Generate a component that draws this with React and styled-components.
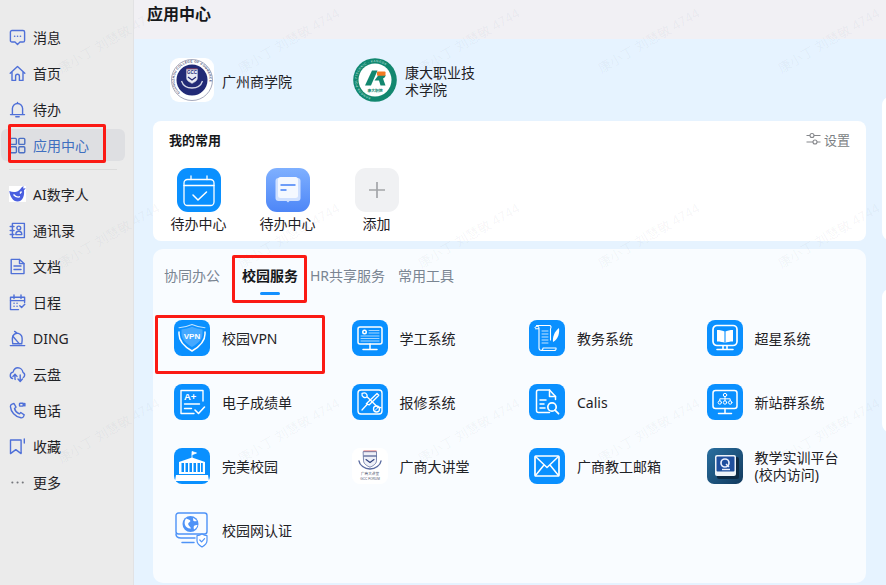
import React from "react";
import styled, { createGlobalStyle } from "styled-components";

const GlobalStyle = createGlobalStyle`
  html, body {
    margin: 0;
    padding: 0;
    background: #e6f3ff;
    font-family: "Noto Sans", "Noto Sans CJK SC", sans-serif;
    color: #1c1f23;
  }
  * { box-sizing: border-box; }
`;

const Page = styled.div`
  position: relative;
  display: flex;
  width: 886px;
  height: 585px;
  overflow: hidden;
`;

const Sidebar = styled.nav`
  flex: 0 0 134px;
  display: flex;
  flex-direction: column;
  padding-top: 19px;
  background: #ebebeb;
  border-right: 1px solid #e2e2e4;
`;

const NavItem = styled.div`
  display: flex;
  align-items: center;
  gap: 7px;
  width: 124px;
  height: 32px;
  margin: 2px 0 2px 1px;
  padding-left: 8px;
  border-radius: 6px;
  font-size: 14px;
  color: ${(p) => (p.$active ? "#3f6fc0" : "#1f2226")};
  background: ${(p) => (p.$active ? "#dedfe2" : "transparent")};
  svg { flex: 0 0 17px; }
`;

const NavDivider = styled.div`
  width: 108px;
  height: 1px;
  margin: 6px 0 6px 9px;
  background: #dcdcdc;
`;

const Main = styled.main`
  flex: 1;
  display: flex;
  flex-direction: column;
  min-width: 0;
`;

const Header = styled.header`
  flex: 0 0 39px;
  padding: 2px 0 0 13px;
  background: #f1f0f4;
  font-size: 16px;
  font-weight: 700;
  line-height: 24px;
  color: #16181b;
`;

const Body = styled.div`
  flex: 1;
  display: flex;
  gap: 16px;
  padding-left: 19px;
  background: #e6f3ff;
`;

const LeftColumn = styled.div`
  flex: 0 0 713px;
  min-width: 0;
  display: flex;
  flex-direction: column;
`;

const RightColumn = styled.div`
  flex: 1;
  display: flex;
  flex-direction: column;
  gap: 49px;
  padding-top: 58px;
`;

const SideCard = styled.div`
  height: 143px;
  width: 30px;
  border-radius: 8px;
  background: #fff;
`;

const Schools = styled.div`
  flex: 0 0 82px;
  display: flex;
  align-items: center;
  padding-left: 17px;
`;

const School = styled.div`
  flex: 0 0 183px;
  display: flex;
  align-items: center;
  gap: 8px;
`;

const SchoolName = styled.div`
  max-width: 72px;
  padding-top: 2px;
  font-size: 14px;
  line-height: 17px;
  color: #1f2226;
`;

const FavCard = styled.section`
  flex: 0 0 120px;
  padding: 8px 16px 0;
  border-radius: 8px;
  background: #fff;
`;

const FavHead = styled.div`
  display: flex;
  justify-content: space-between;
  align-items: center;
  height: 20px;
`;

const FavTitle = styled.div`
  font-size: 13px;
  font-weight: 700;
  color: #16181b;
`;

const Settings = styled.div`
  display: flex;
  align-items: center;
  gap: 3px;
  font-size: 13px;
  color: #7c7f84;
`;

const FavRow = styled.div`
  display: flex;
  margin: 19px 0 0 -15px;
`;

const Fav = styled.div`
  display: flex;
  flex-direction: column;
  align-items: center;
  width: 89px;
  font-size: 14px;
  line-height: 20px;
  color: #1f2226;
  svg { display: block; margin-bottom: 2px; }
`;

const AppsCard = styled.section`
  flex: 0 0 334px;
  margin-top: 8px;
  padding: 17px 0 0 11px;
  border-radius: 10px;
  background: #f9fcff;
`;

const Tabs = styled.div`
  display: flex;
  gap: 12px;
`;

const Tab = styled.div`
  display: flex;
  flex-direction: column;
  align-items: center;
  margin-left: ${(p) => p.$offset}px;
  font-size: 14px;
  line-height: 20px;
  font-weight: ${(p) => (p.$active ? 700 : 400)};
  color: ${(p) => (p.$active ? "#16181b" : "#7a8592")};
`;

const TabBar = styled.span`
  width: 20px;
  height: 3px;
  margin-top: 6px;
  border-radius: 2px;
  background: #1390ff;
`;

const AppGrid = styled.div`
  display: grid;
  grid-template-columns: repeat(3, 177.5px) 1fr;
  grid-auto-rows: 64px;
  margin: 25px 0 0 10px;
`;

const AppItem = styled.div`
  display: flex;
  align-items: flex-start;
  gap: 12px;
  svg { display: block; flex: 0 0 36px; }
`;

const AppName = styled.div`
  height: 36px;
  display: flex;
  align-items: center;
  max-width: 88px;
  font-size: 14px;
  line-height: 17px;
  color: #1f2226;
`;

const RedBox = styled.div`
  position: absolute;
  left: ${(p) => p.$x}px;
  top: ${(p) => p.$y}px;
  width: ${(p) => p.$w}px;
  height: ${(p) => p.$h}px;
  border: 3px solid #fb1a14;
  border-radius: 2px;
  pointer-events: none;
`;

const Watermark = styled.div`
  position: absolute;
  left: 63px;
  top: 60px;
  display: grid;
  grid-template-columns: repeat(5, 180px);
  grid-auto-rows: 195px;
  pointer-events: none;
`;

const Stamp = styled.span`
  display: block;
  width: 130px;
  height: 16px;
  font-size: 13px;
  line-height: 16px;
  white-space: nowrap;
  color: rgba(40, 60, 90, 0.05);
  transform-origin: left bottom;
  transform: rotate(-30deg);
`;

const NAV = "#4f70d8";

const NavIcon = ({ children, color = NAV }) => (
  <svg width="17" height="17" viewBox="0 0 17 17" fill="none" stroke={color} strokeWidth="1.4" strokeLinejoin="round" strokeLinecap="round">
    {children}
  </svg>
);

const Nav = {
  msg: (
    <NavIcon>
      <path d="M3 1.500h11a1.600 1.600 0 0 1 1.600 1.600v8.300a1.600 1.600 0 0 1-1.600 1.600h-3l-2.500 2.500L6 13H3a1.600 1.600 0 0 1-1.600-1.600V3.100A1.600 1.600 0 0 1 3 1.500z" />
      <path d="M5.600 7.300h.1M8.500 7.300h.1M11.400 7.300h.1" strokeWidth="1.600" />
    </NavIcon>
  ),
  home: (
    <NavIcon>
      <path d="M1.200 8.200 8.500 1.500l7.300 6.700M3 6.800V15.400h3.600v-4.200a1.900 1.900 0 0 1 3.800 0v4.200H14V6.800" />
    </NavIcon>
  ),
  bell: (
    <NavIcon>
      <path d="M3.400 13.600V7.600a5.100 5.100 0 0 1 10.200 0v6M1.500 13.600h14" />
      <path d="M6.800 15.800h3.400M8.500 1.400v1" />
    </NavIcon>
  ),
  grid: (
    <NavIcon color="#4a6fc4">
      <rect x="1.400" y="1.400" width="6" height="6" rx="1" />
      <rect x="9.800" y="1.400" width="6" height="6" rx="1" />
      <rect x="1.400" y="9.800" width="6" height="6" rx="1" />
      <rect x="9.800" y="9.800" width="6" height="6" rx="1" />
    </NavIcon>
  ),
  ai: (
    <svg width="17" height="17" viewBox="0 0 17 17">
      <rect width="17" height="16" fill="#fff" />
      <path d="M0.300 5c2.200 1 4.600 1.300 7 .8 2.200-.5 3.800-2.300 5.200-4.300L14.500 0l-.3 2.600 2.500-.3-1.700 2c.6 5.200-1 11.200-6.500 11.200C4 15.500 1 10.500.3 5z" fill="#4a5fe0" />
      <path d="M4.500 8.500c1.800 2.200 4.300 3 6.500 2.200M12.500 5.500l-1.500 2" stroke="#fff" strokeWidth="1.300" fill="none" />
    </svg>
  ),
  contacts: (
    <NavIcon>
      <path d="M3.400 1.400h12v14.200h-12z" />
      <path d="M1.200 4.500h3.800M1.200 8.500h3.800M1.200 12.500h3.800" />
      <circle cx="9.800" cy="6" r="1.900" />
      <path d="M6.800 12.600c0-2 1.300-3.400 3-3.400s3 1.400 3 3.400z" />
    </NavIcon>
  ),
  doc: (
    <NavIcon>
      <path d="M10.500 1.400H2.200v14.200h12.800V5.600z" />
      <path d="M10.500 1.400v4.200H15M5 8h7M5 11.500h7" />
    </NavIcon>
  ),
  calendar: (
    <NavIcon>
      <path d="M15.600 8.500V3.200H1.500v12.400h8" />
      <path d="M5 1v3.600M12 1v3.600M1.500 6.600h14" />
      <path d="M5 9.200h.1M8 9.200h.1M5 12.300h.1M8 12.300h.1" strokeWidth="1.500" />
      <path d="m10.800 11.800 1.800 1.800 3.200-3.400" />
    </NavIcon>
  ),
  ding: (
    <NavIcon>
      <path d="M3.800 13.800c-.6-3.200-.8-7.600 1.400-9.400 2.600-2.100 6-1.100 7.200 1.200 1.300 2.400.8 5.600.3 8.200z" />
      <path d="M1.300 15.600h14.400M5.600 1.400l1.800 1.200M3.800 6.200l6.400 7.400" />
    </NavIcon>
  ),
  cloud: (
    <NavIcon>
      <path d="M3.600 12.600C2 12 1.100 10.600 1.300 9c.2-1.500 1.300-2.700 2.800-2.900C4.800 3.400 6.500 1.800 8.800 1.800c2.800 0 4.900 2.100 5.100 4.500 1.200.5 1.900 1.700 1.700 3-.1.900-.6 1.700-1.300 2.200" />
      <path d="M6 8.300v4.600a2 2 0 0 0 .2.600M3.900 10.400 6 8.200l2 2.200M11.200 9v6.300M9 13.100l2.200 2.300 2.200-2.300" />
    </NavIcon>
  ),
  phone: (
    <NavIcon>
      <path d="M3 2.200 5 1.500l2 3.700-1.500 1.300c.6 2.400 2.500 4.400 4.800 5.400l1.500-1.400 3.400 2.300-.8 2c-.5 1-1.400 1.200-2.500 1C6 14.800 1.800 9.800 1.400 4.600 1.300 3.500 2 2.600 3 2.200z" />
      <rect x="10.500" y="1.300" width="3.800" height="2.800" rx=".5" />
      <path d="m14.300 2.300 1.600-.8v2.400l-1.600-.7" />
    </NavIcon>
  ),
  bookmark: (
    <NavIcon>
      <path d="M1.500 2h10.600v13.600L6.800 11.600 1.500 15.600z" />
      <path d="M15.300 1v4" />
    </NavIcon>
  ),
  more: (
    <NavIcon color="#75777c">
      <path d="M3.300 8.500h.1M8.500 8.500h.1M13.700 8.500h.1" strokeWidth="2" />
    </NavIcon>
  ),
};

const NAV_TOP = [
  { name: "消息", icon: Nav.msg },
  { name: "首页", icon: Nav.home },
  { name: "待办", icon: Nav.bell },
  { name: "应用中心", icon: Nav.grid, active: true },
];

const NAV_BOTTOM = [
  { name: "AI数字人", icon: Nav.ai },
  { name: "通讯录", icon: Nav.contacts },
  { name: "文档", icon: Nav.doc },
  { name: "日程", icon: Nav.calendar },
  { name: "DING", icon: Nav.ding },
  { name: "云盘", icon: Nav.cloud },
  { name: "电话", icon: Nav.phone },
  { name: "收藏", icon: Nav.bookmark },
  { name: "更多", icon: Nav.more },
];

const BLUE = "#0a90ff";

const Tile = ({ children, bg = BLUE }) => (
  <svg width="36" height="36" viewBox="0 0 36 36" fill="none" stroke="#fff" strokeWidth="1.200" strokeLinejoin="round" strokeLinecap="round">
    <rect width="36" height="36" rx="8" fill={bg} stroke="none" />
    {children}
  </svg>
);

const icons = {
  vpn: (
    <Tile>
      <path d="M7.500 9.500c3.800-.5 7-1.400 10.500-2.700 3.500 1.300 6.700 2.200 10.500 2.700v4c0 6-4.500 10-10.500 13.500C12 23.500 7.500 19.500 7.500 13.500z" fill="#45a9ff" stroke="none" />
      <path d="M5 7.800c4.800-.6 9-1.500 13-3.300 4 1.800 8.200 2.700 13 3.300" strokeWidth="1.100" opacity=".75" />
      <path d="M5 12v2c0 7.500 6 13 13 17 7-4 13-9.500 13-17v-2" strokeWidth="1.500" />
      <text x="18" y="18.500" fontSize="8" fontWeight="700" fill="#fff" stroke="none" textAnchor="middle" fontFamily="Liberation Sans, sans-serif">VPN</text>
    </Tile>
  ),
  xuegong: (
    <Tile>
      <rect x="6" y="7" width="24" height="17" rx="2" strokeWidth="1.500" />
      <path d="M18 24v5M11 29.500h14" strokeWidth="1.500" />
      <circle cx="12.500" cy="12" r="2.500" fill="#fff" stroke="none" />
      <circle cx="12.500" cy="12" r="1" fill={BLUE} stroke="none" />
      <path d="M17 10.500h10M17 13h10M9 16h18M9 18.500h18M9 21h18" strokeWidth=".8" opacity=".8" />
    </Tile>
  ),
  jiaowu: (
    <Tile>
      <path d="M6 7.500c1.500-2 4-1.500 4 .5v.8H6.500M7.500 5.500h13c1.500 0 2 1.500 1 3.500v11M10 9v19c0 1.500 1 2.500 2.500 2.500H25c1.500 0 2.500-1 2-2.500h-13c0 1.500-.5 2.500-2 2.500" strokeWidth="1.100" />
      <path d="M13 11h6M13 14h6M13 17h6M13 20h6M13 23h6" strokeWidth=".9" opacity=".85" />
      <path d="M24 22c-.5-5 1-10 6-14 .6 5-.5 11-6 14z" fill="#fff" stroke="none" />
    </Tile>
  ),
  chaoxing: (
    <Tile>
      <rect x="6" y="5.500" width="24" height="20" rx="4" strokeWidth="1.700" />
      <path d="M10 10c3 0 6 .5 8 1.800 2-1.300 5-1.800 8-1.800v11.500c-3 0-6 .5-8 1.500-2-1-5-1.500-8-1.500z" fill="#fff" stroke="none" />
      <path d="M18 11.800V23" stroke={BLUE} strokeWidth="1.100" />
      <path d="M16 26v2.500M20 26v2.500M10 29.500h16" strokeWidth="1.600" />
    </Tile>
  ),
  score: (
    <Tile>
      <path d="M29 17V6.500H7V29.500h13" strokeWidth="1.400" />
      <text x="10" y="16" fontSize="9.500" fontWeight="700" fill="#fff" stroke="none" fontFamily="Liberation Sans, sans-serif">A+</text>
      <path d="M10.500 20h15M10.500 24.500h7" strokeWidth="1.400" />
      <path d="m21 26 3.500 3.500 6-6.500" strokeWidth="1.600" />
    </Tile>
  ),
  repair: (
    <Tile>
      <rect x="6" y="6" width="24" height="24" rx="3" strokeWidth="1.400" />
      <path d="M10 9.500c2-1 4-.5 4.800 1 .4.800.4 1.500.2 2.200l11 10.800c1.500-.5 3 .2 3 .2M15 12.700c-.8.800-2.500 1-3.500.4-1.300-.8-1.800-2.200-1.500-3.600" strokeWidth="1.300" />
      <path d="M25 9.500l1.800 1.800-9.500 9.500-3-1zM15.500 20l-5.500 6" strokeWidth="1.300" />
      <circle cx="24.500" cy="25" r="3" strokeWidth="1.300" />
      <path d="m23 26.500 3-3" strokeWidth="1" />
    </Tile>
  ),
  calis: (
    <Tile>
      <path d="M20.500 28.500H9.500a2 2 0 0 1-2-2V8a2 2 0 0 1 2-2h11l6 6.500v3" strokeWidth="1.500" />
      <path d="M20.500 6v6.500h6M11 16h6M11 20h4M11 24h5" strokeWidth="1.500" />
      <circle cx="23" cy="23" r="4.200" strokeWidth="1.700" />
      <path d="m26 26.200 3.500 3.500" strokeWidth="1.800" />
    </Tile>
  ),
  zhanqun: (
    <Tile>
      <rect x="6" y="6.500" width="24" height="18" rx="2.500" strokeWidth="1.500" />
      <path d="M18 24.500v5M11.500 29.500h13" strokeWidth="1.500" />
      <circle cx="18" cy="11" r="1.700" strokeWidth="1" />
      <circle cx="12.800" cy="18.500" r="1.700" strokeWidth="1" />
      <circle cx="18" cy="18.500" r="1.700" strokeWidth="1" />
      <circle cx="23.200" cy="18.500" r="1.700" strokeWidth="1" />
      <path d="M18 12.700v4M12.800 16.800v-2h10.400v2" strokeWidth="1" />
    </Tile>
  ),
  campus: (
    <Tile>
      <path d="M18 10V3.500l4.500 1.500-4.500 1.800" fill="#fff" strokeWidth=".8" />
      <path d="M5 14l13-4.500L31 14v12H5z" fill="#fff" stroke="none" />
      <path d="M7.500 15h2.500v9H7.500zM11.500 15h2.500v9h-2.500zM15.500 15h2.500v9h-2.500zM19.500 15h2.500v9h-2.500zM23.500 15h2.500v9h-2.500zM27 15h1.800v9H27z" fill={BLUE} stroke="none" />
      <path d="M2 27h32l1 6H1z" fill="#fff" stroke="none" />
    </Tile>
  ),
  lecture: (
    <Tile bg="#ffffff">
      <rect x="11.500" y="2.500" width="13" height="1.200" fill="#e8716b" stroke="none" />
      <path d="M11.500 3.700h13v9c0 3-3 5-6.500 6.500-3.500-1.500-6.500-3.500-6.500-6.500z" fill="#eef0f7" stroke="#46588f" strokeWidth=".7" />
      <path d="M12 8h12M14 11.500l4 3 4-3" stroke="#2d3f7c" strokeWidth="1.100" />
      <path d="M7 13c.5 4 5.500 8 11 8s10.500-4 11-8" stroke="#5a6ba0" strokeWidth="1.400" />
      <text x="18" y="27" fontSize="3.600" fill="#4a4f6a" stroke="none" textAnchor="middle">广商大讲堂</text>
      <text x="18" y="32" fontSize="3.200" fill="#4a4f6a" stroke="none" textAnchor="middle" fontFamily="Liberation Sans, sans-serif">GCC FORUM</text>
    </Tile>
  ),
  mail: (
    <Tile>
      <rect x="6" y="8" width="24" height="20" rx="1" strokeWidth="1.700" />
      <path d="M6.500 8.500 18 19.500 29.500 8.500M6.500 27.500l8.500-10.500M29.500 27.500 21 17" strokeWidth="1.500" />
    </Tile>
  ),
  training: (
    <svg width="36" height="36" viewBox="0 0 36 36">
      <defs>
        <linearGradient id="trainBg" x1="0" y1="0" x2="1" y2="1">
          <stop offset="0" stopColor="#2a6fa0" />
          <stop offset="1" stopColor="#123a5e" />
        </linearGradient>
      </defs>
      <rect width="36" height="36" rx="7" fill="url(#trainBg)" />
      <rect x="10" y="9" width="22" height="22" rx="2" fill="#0d2a45" />
      <rect x="8" y="7" width="21" height="21" rx="2" fill="#eef2f8" />
      <rect x="9.500" y="8.500" width="18" height="15" rx="1" fill="#1f4f9e" />
      <circle cx="18" cy="15" r="4" fill="none" stroke="#e8eefb" strokeWidth="1.700" />
      <path d="M15 21.500h8" stroke="#e8eefb" strokeWidth="1.400" />
      <path d="M19 16l3 3" stroke="#e8eefb" strokeWidth="1.400" />
    </svg>
  ),
  network: (
    <svg width="36" height="36" viewBox="0 0 36 36" fill="none" stroke="#4f93f7" strokeWidth="1.200" strokeLinecap="round" strokeLinejoin="round">
      <rect x="2" y="1" width="31" height="21" rx="2.500" strokeWidth="1.400" />
      <path d="M21 26H7c-3 0-5-1.500-5-4M8 30.500h12" strokeWidth="1.500" />
      <circle cx="16.500" cy="12" r="8" fill="#4f93f7" stroke="none" />
      <path d="M12 6.500c2 .5 3.500 1 4.500 2.500-1 1.500-3 2-2 4s2 1.500 2.500 3.500c-2.500.5-5-1-6-3.500-.8-2.200-.2-4.800 1-6.500zM19 6c1.500.5 3 1.500 3.800 3-1 .6-2.500.3-3.500-.3zM20 14c.8-.8 2-1 3.500-1-.5 2-1.800 3.600-3.500 4.500-.5-1.500-.5-2.500 0-3.500z" fill="#fff" stroke="none" />
      <path d="M28 22c1.800 1 3.500 1.500 5 1.700v4.800c0 3-2.300 5-5 6.500-2.700-1.500-5-3.500-5-6.500v-4.800c1.500-.2 3.200-.7 5-1.700z" fill="#fff" />
      <path d="m25.800 28 1.800 1.800 3-3.200" />
    </svg>
  ),
};

const APPS = [
  { name: "校园VPN", icon: icons.vpn },
  { name: "学工系统", icon: icons.xuegong },
  { name: "教务系统", icon: icons.jiaowu },
  { name: "超星系统", icon: icons.chaoxing },
  { name: "电子成绩单", icon: icons.score },
  { name: "报修系统", icon: icons.repair },
  { name: "Calis", icon: icons.calis },
  { name: "新站群系统", icon: icons.zhanqun },
  { name: "完美校园", icon: icons.campus },
  { name: "广商大讲堂", icon: icons.lecture },
  { name: "广商教工邮箱", icon: icons.mail },
  { name: "教学实训平台(校内访问)", icon: icons.training },
  { name: "校园网认证", icon: icons.network },
];

const TABS = [
  { name: "协同办公", offset: 0 },
  { name: "校园服务", offset: 10, active: true },
  { name: "HR共享服务", offset: 0 },
  { name: "常用工具", offset: 1 },
];

function GccLogo() {
  return (
    <svg width="44" height="44" viewBox="0 0 44 44">
      <defs>
        <path id="gccRing" d="M22 39.500a17.500 17.500 0 1 1 .01 0" />
      </defs>
      <rect width="44" height="44" rx="9" fill="#fff" />
      <circle cx="22" cy="22" r="20.500" fill="#fff" stroke="#8f93ab" strokeWidth=".8" />
      <text fontSize="3.200" fill="#4a4f78" fontFamily="Liberation Sans, sans-serif" fontWeight="700" letterSpacing=".3">
        <textPath href="#gccRing" startOffset="12%">GUANGZHOU COLLEGE OF COMMERCE</textPath>
      </text>
      <circle cx="22" cy="22" r="15.500" fill="#222a76" />
      <path d="M16.500 11h11" stroke="#d9534f" strokeWidth=".8" />
      <path d="M16.500 11.500h11V20c0 2.500-2.500 4-5.500 5.500-3-1.500-5.500-3-5.500-5.500z" fill="#e9ebf4" stroke="#b8bbd0" strokeWidth=".5" />
      <text x="22" y="16" fontSize="4.500" fill="#222a76" textAnchor="middle" fontFamily="Liberation Sans, sans-serif" fontWeight="700">GCC</text>
      <path d="M18 19l4 3 4-3" stroke="#222a76" strokeWidth="1.200" fill="none" />
      <path d="M11.500 23c1.500 4.500 5.500 7 10.500 7s9-2.500 10.500-7" stroke="#d8dae8" strokeWidth="1.300" fill="none" />
    </svg>
  );
}

function KangdaLogo() {
  return (
    <svg width="44" height="44" viewBox="0 0 44 44">
      <defs>
        <path id="kdRing" d="M22 40a18 18 0 1 1 .01 0" />
      </defs>
      <circle cx="22" cy="22" r="21.800" fill="#12876f" />
      <text fontSize="3" fill="#d9efe9" fontFamily="Liberation Sans, sans-serif" letterSpacing=".5">
        <textPath href="#kdRing" startOffset="4%">KANGDA POLYTECHNIC · KANGDA</textPath>
      </text>
      <circle cx="22" cy="22" r="16.500" fill="#fff" />
      <path d="M12 27.500 19 12.500h5.500L18 27.500z" fill="#12876f" />
      <path d="M21.500 22.500h4.500l1.500 5h5l-2.500-7c2-.8 2.500-2 2.500-3.500h-7z" fill="#12876f" />
      <rect x="24" y="13.500" width="8.500" height="4.200" rx=".8" fill="#f27a23" />
      <text x="22" y="33.500" fontSize="3.800" fill="#12876f" textAnchor="middle" fontWeight="700">康大职院</text>
    </svg>
  );
}

function FavCalendar() {
  return (
    <svg width="44" height="44" viewBox="0 0 44 44" fill="none" stroke="#fff" strokeWidth="1.300" strokeLinecap="round" strokeLinejoin="round">
      <rect width="44" height="44" rx="11" fill="#0a90ff" stroke="none" />
      <rect x="7" y="11.500" width="30" height="26" rx="3.500" />
      <path d="M7 17.500h30M14 8v3.500M30 8v3.500" />
      <path d="m16 27 5 5 8.500-8" strokeWidth="1.500" />
    </svg>
  );
}

function FavBook() {
  return (
    <svg width="44" height="44" viewBox="0 0 44 44">
      <defs>
        <linearGradient id="favBook" x1="0" y1="0" x2="0" y2="1">
          <stop offset="0" stopColor="#7fb0ff" />
          <stop offset="1" stopColor="#4d86f7" />
        </linearGradient>
      </defs>
      <rect width="44" height="44" rx="11" fill="url(#favBook)" />
      <rect x="9.500" y="10" width="25" height="23" rx="3" fill="#cfe0ff" />
      <rect x="12" y="9" width="20" height="21" rx="2.500" fill="#f4f8ff" />
      <path d="M20.500 33h3l-1.500 1.500z" fill="#cfe0ff" />
      <path d="M14.500 17h15" stroke="#4d86f7" strokeWidth="1.600" />
      <path d="M14.500 22h6" stroke="#4d86f7" strokeWidth="1.600" />
    </svg>
  );
}

function FavAdd() {
  return (
    <svg width="44" height="44" viewBox="0 0 44 44">
      <rect width="44" height="44" rx="11" fill="#f0f1f3" />
      <path d="M22 14v16M14 22h16" stroke="#a3a5a8" strokeWidth="1.700" />
    </svg>
  );
}

function SlidersIcon() {
  return (
    <svg width="15" height="14" viewBox="0 0 15 14" fill="none" stroke="#85878b" strokeWidth="1.100">
      <path d="M0.500 3.500h3.500M8 3.500h6.500M0.500 10h6.500M11 10h3.500" />
      <circle cx="6" cy="3.500" r="2" />
      <circle cx="9" cy="10" r="2" />
    </svg>
  );
}

export default function App() {
  return (
    <Page>
      <GlobalStyle />
      <Sidebar>
        {NAV_TOP.map((item) => (
          <NavItem key={item.name} $active={item.active}>
            {item.icon}
            {item.name}
          </NavItem>
        ))}
        <NavDivider />
        {NAV_BOTTOM.map((item) => (
          <NavItem key={item.name}>
            {item.icon}
            {item.name}
          </NavItem>
        ))}
      </Sidebar>
      <Main>
        <Header>应用中心</Header>
        <Body>
          <LeftColumn>
            <Schools>
              <School>
                <GccLogo />
                <SchoolName>广州商学院</SchoolName>
              </School>
              <School>
                <KangdaLogo />
                <SchoolName>康大职业技术学院</SchoolName>
              </School>
            </Schools>
            <FavCard>
              <FavHead>
                <FavTitle>我的常用</FavTitle>
                <Settings>
                  <SlidersIcon />
                  设置
                </Settings>
              </FavHead>
              <FavRow>
                <Fav>
                  <FavCalendar />
                  待办中心
                </Fav>
                <Fav>
                  <FavBook />
                  待办中心
                </Fav>
                <Fav>
                  <FavAdd />
                  添加
                </Fav>
              </FavRow>
            </FavCard>
            <AppsCard>
              <Tabs>
                {TABS.map((tab) => (
                  <Tab key={tab.name} $active={tab.active} $offset={tab.offset}>
                    {tab.name}
                    {tab.active && <TabBar />}
                  </Tab>
                ))}
              </Tabs>
              <AppGrid>
                {APPS.map((app) => (
                  <AppItem key={app.name}>
                    {app.icon}
                    <AppName>{app.name}</AppName>
                  </AppItem>
                ))}
              </AppGrid>
            </AppsCard>
          </LeftColumn>
          <RightColumn>
            <SideCard />
            <SideCard />
          </RightColumn>
        </Body>
      </Main>
      <Watermark>
        {Array.from({ length: 15 }, (_, i) => (
          <Stamp key={i}>康小丁 刘慧敏 4744</Stamp>
        ))}
      </Watermark>
      <RedBox $x={8} $y={124} $w={98} $h={39} />
      <RedBox $x={232} $y={255} $w={75} $h={48} />
      <RedBox $x={155} $y={315} $w={170} $h={59} />
    </Page>
  );
}
